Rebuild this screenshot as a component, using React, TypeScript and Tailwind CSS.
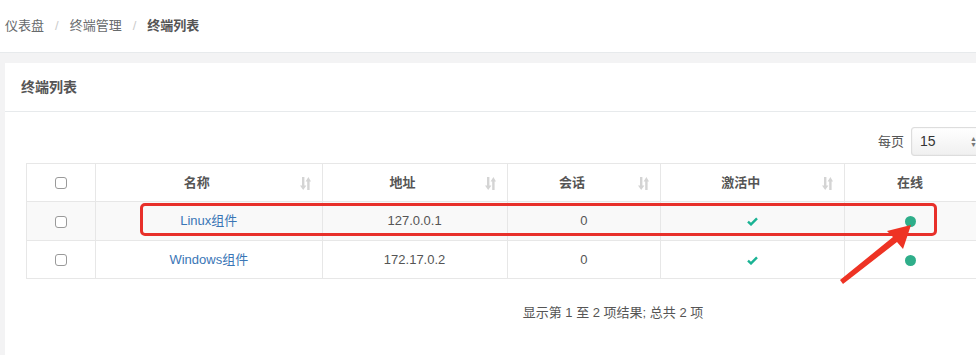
import React from 'react';

const font = { fontFamily: '"Liberation Sans", "Noto Sans CJK SC", sans-serif' };

const SortIcon = () => (
  <svg width="11" height="13" viewBox="0 0 11 13" className="text-[#d4d4d4]">
    <path d="M2 0h2.4v8.5h2L3.2 13 0 8.5h2z" fill="currentColor" />
    <path d="M7.2 13h2.4V4.5h1.4L8.4 0 5.6 4.5h1.6z" fill="currentColor" />
  </svg>
);

const Check = () => (
  <svg width="11" height="9" viewBox="0 0 11 9">
    <path d="M1 4.6l3 2.8L10 1.3" fill="none" stroke="#1ab394" strokeWidth="2.4" />
  </svg>
);

const Box = () => <span className="inline-block w-[12px] h-[12px] rounded-[3px] border border-[#9a9a9a] bg-white align-middle" />;

const rows = [
  { name: 'Linux组件', ip: '127.0.0.1', sessions: '0' },
  { name: 'Windows组件', ip: '172.17.0.2', sessions: '0' },
];

export default function App() {
  return (
    <div className="relative w-[976px] h-[355px] overflow-hidden bg-[#f3f3f4] text-[13px] text-[#676a6c]" style={font}>
      <div className="h-[53px] bg-white border-b border-[#e7eaec] flex items-center pl-[5px] gap-[11px]">
        <span>仪表盘</span>
        <span className="text-[#ccc]">/</span>
        <span>终端管理</span>
        <span className="text-[#ccc]">/</span>
        <span className="font-semibold text-[#555]">终端列表</span>
      </div>

      <div className="ml-[5px] mt-[10px] w-[1000px] h-[300px] bg-white">
        <div className="h-[49px] border-b border-[#e7eaec] flex items-center pl-[16px] font-semibold text-[#555] text-[14px]">终端列表</div>
        <div className="pl-[21px] pt-[15px]">
          <div className="flex items-center h-[29px] mb-[7px] pl-[852px] w-[1000px] whitespace-nowrap">
            <span className="shrink-0 mr-[7px] text-[#555]">每页</span>
            <div className="shrink-0 relative w-[100px] h-[29px] border border-[#ddd] rounded-[3px] bg-gradient-to-b from-white to-[#f0f0f0] shadow-[inset_0_0_1px_#ccc] flex items-center pl-[8px] text-[#333] text-[14px]">
              <span>15</span>
              <span className="absolute left-[58px] top-[8px] flex flex-col text-[7px] leading-[6px] text-[#777]"><span>▲</span><span>▼</span></span>
            </div>
          </div>
          <table className="border-collapse text-center text-[13px]" style={{ width: 971 }}>
            <colgroup>
              <col style={{ width: 69 }} />
              <col style={{ width: 227 }} />
              <col style={{ width: 185 }} />
              <col style={{ width: 154 }} />
              <col style={{ width: 184 }} />
              <col style={{ width: 152 }} />
            </colgroup>
            <thead>
              <tr className="h-[38px] font-semibold text-[#555]">
                <th className="border border-[#e7e7e7]"><Box /></th>
                {['名称', '地址', '会话', '激活中'].map((h) => (
                  <th key={h} className="border border-[#e7e7e7] relative pr-[24px]">
                    {h}
                    <span className="absolute right-[11px] top-[13px]"><SortIcon /></span>
                  </th>
                ))}
                <th className="border border-[#e7e7e7] pr-[21px]">在线</th>
              </tr>
            </thead>
            <tbody>
              {rows.map((r, i) => (
                <tr key={r.name} className={i === 0 ? 'h-[39px] bg-[#f9f9f9]' : 'h-[38px] bg-white'}>
                  <td className="border border-[#e7e7e7]"><Box /></td>
                  <td className="border border-[#e7e7e7] text-[#3a76b6]">{r.name}</td>
                  <td className="border border-[#e7e7e7] text-[#555]">{r.ip}</td>
                  <td className="border border-[#e7e7e7] text-[#555]">{r.sessions}</td>
                  <td className="border border-[#e7e7e7]"><span className="inline-block align-middle"><Check /></span></td>
                  <td className="border border-[#e7e7e7] pr-[21px]">
                    <span className="inline-block w-[11px] h-[11px] rounded-full bg-[#2fae8a] align-middle" />
                  </td>
                </tr>
              ))}
            </tbody>
          </table>
          <div className="w-[1174px] text-center mt-[24px] text-[#555]">显示第 1 至 2 项结果; 总共 2 项</div>
        </div>
      </div>

      {/* annotation overlay */}
      <div className="absolute left-[140px] top-[203px] w-[797px] h-[33px] border-[3px] border-[#e8302a] rounded-[5px]" />
      <svg className="absolute left-0 top-0" width="976" height="355">
        <path d="M840 280 L843 284 L897 242 L903 249 L911 225 L887 231 L893 237 Z" fill="#ee3324" />
      </svg>
    </div>
  );
}
